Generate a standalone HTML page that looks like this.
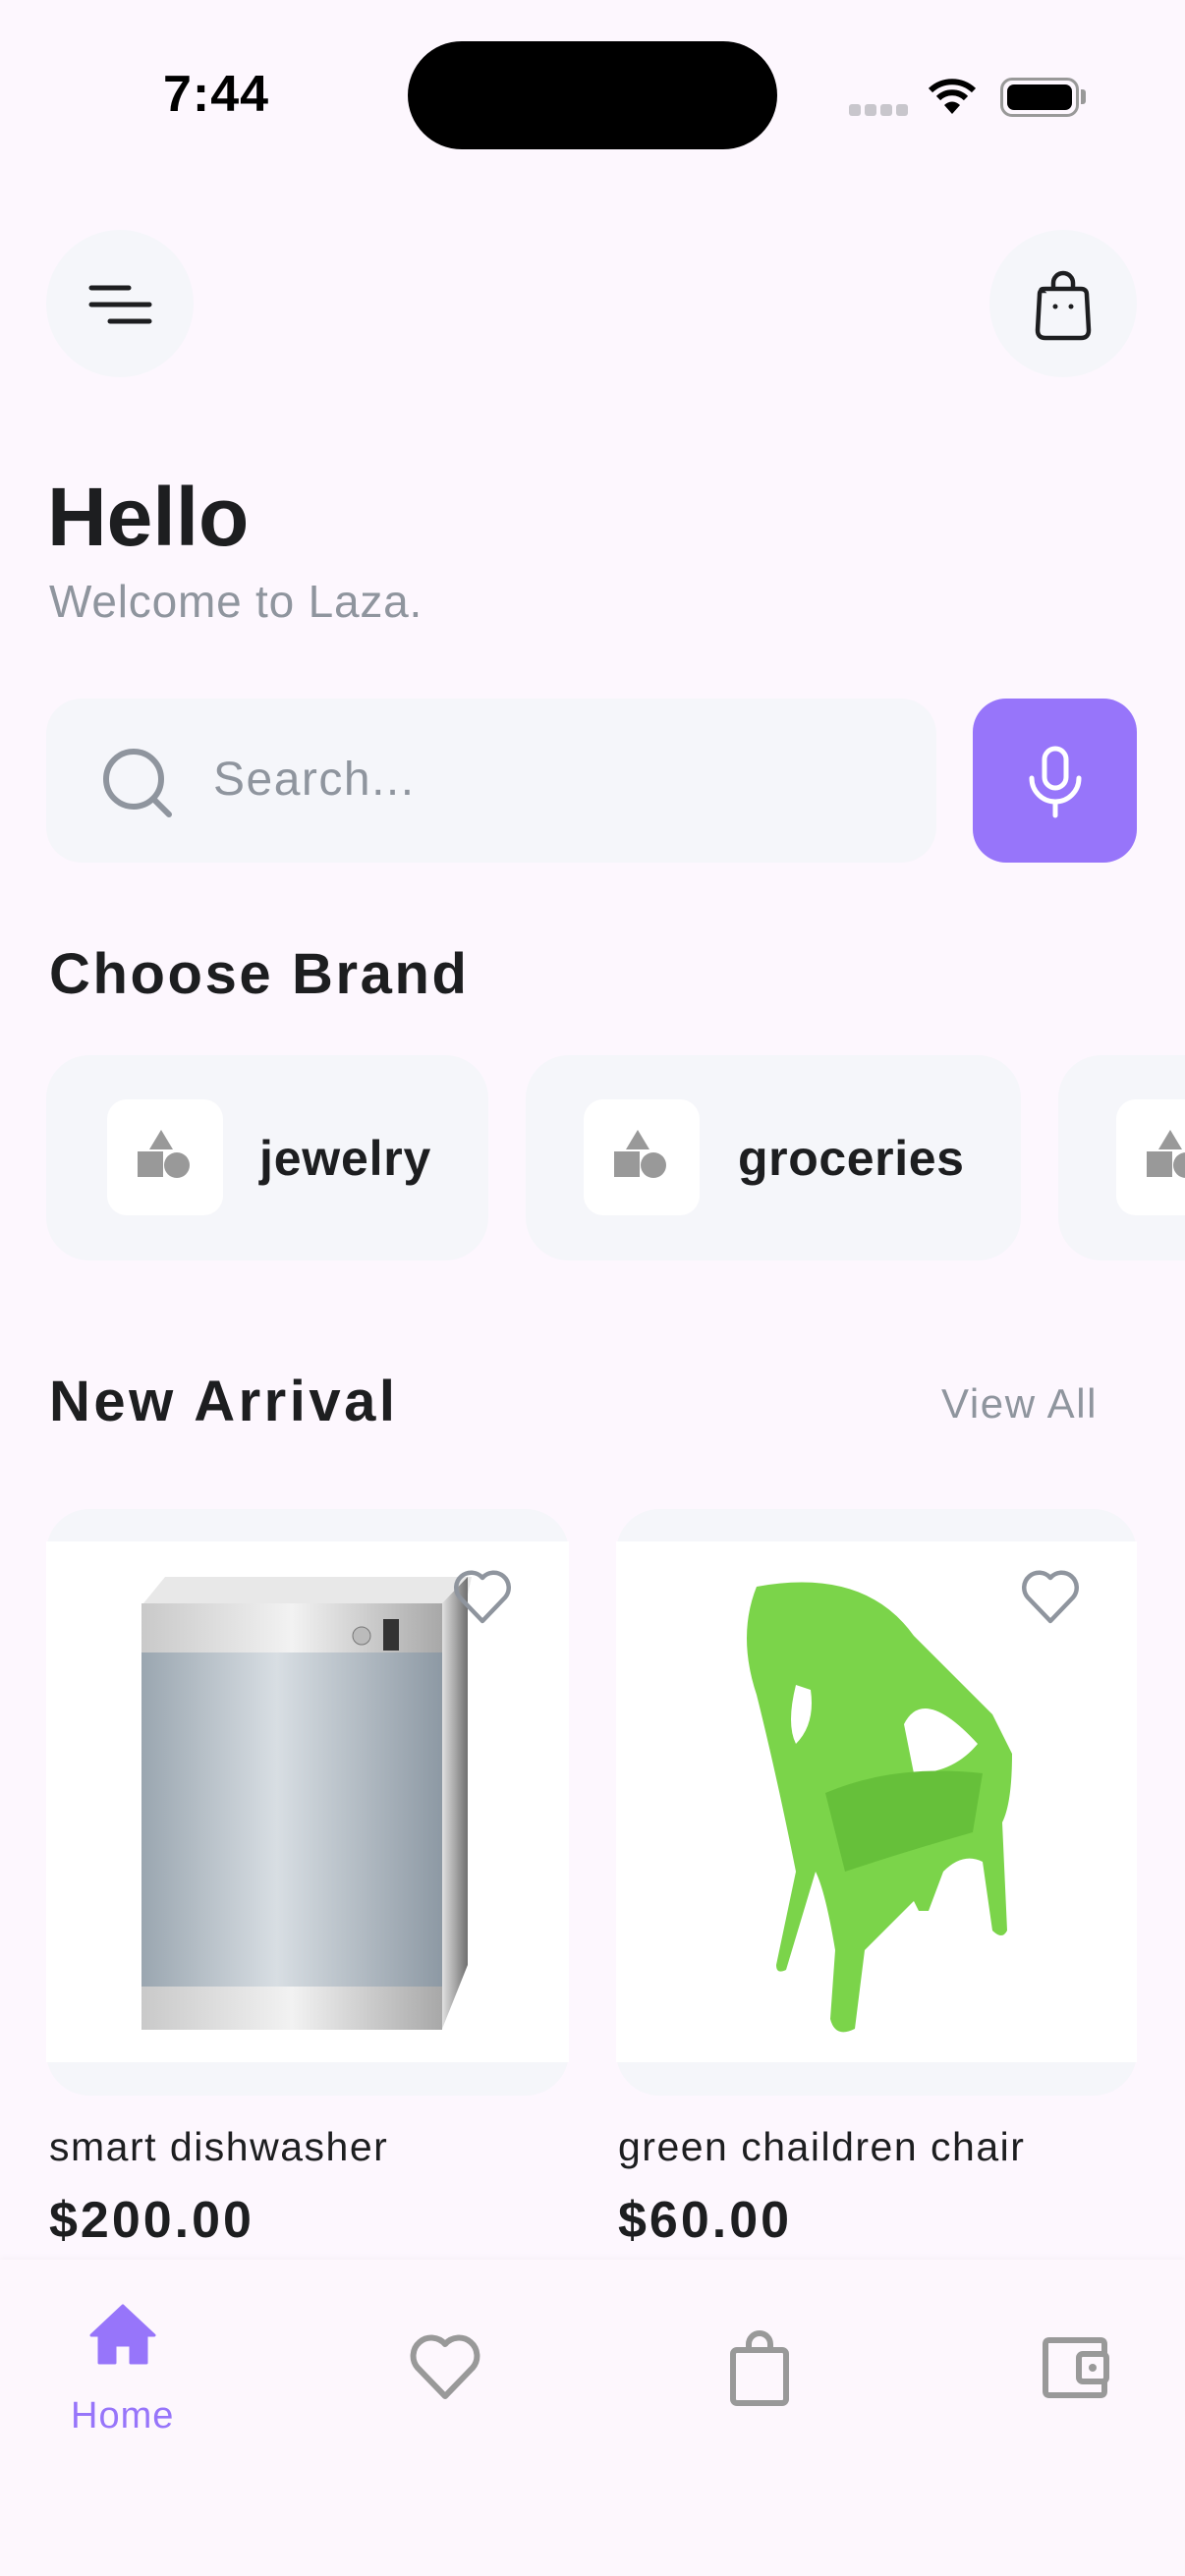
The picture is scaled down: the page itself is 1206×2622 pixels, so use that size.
<!DOCTYPE html>
<html><head><meta charset="utf-8">
<style>
*{margin:0;padding:0;box-sizing:border-box}
body{width:1206px;height:2622px;background:#FDF7FE;font-family:"Liberation Sans",sans-serif;position:relative;overflow:hidden;color:#1D1B20}
.a{position:absolute}
.t{white-space:nowrap}
</style></head><body>
<!-- status bar -->
<div class="a t" style="left:166px;top:66px;font-size:52px;font-weight:700;color:#000;letter-spacing:1px">7:44</div>
<div class="a" style="left:415px;top:42px;width:376px;height:110px;background:#000;border-radius:55px"></div>
<div class="a" style="left:864px;top:106px;width:60px;height:12px;display:flex;gap:4px">
<span style="width:12px;height:12px;border-radius:3px;background:#C8C6CC"></span><span style="width:12px;height:12px;border-radius:3px;background:#C8C6CC"></span><span style="width:12px;height:12px;border-radius:3px;background:#C8C6CC"></span><span style="width:12px;height:12px;border-radius:3px;background:#C8C6CC"></span></div>
<svg class="a" style="left:943px;top:78px" width="52" height="40" viewBox="0 0 52 40"><path d="M4 14 A32 32 0 0 1 48 14" stroke="#000" stroke-width="6" fill="none"/><path d="M12 22 A20 20 0 0 1 40 22" stroke="#000" stroke-width="6" fill="none"/><path d="M26 38 L18 29 A11 11 0 0 1 34 29 Z" fill="#000"/></svg>
<div class="a" style="left:1018px;top:79px;width:80px;height:40px;border:3px solid #999;border-radius:12px;padding:4px"><div style="width:100%;height:100%;background:#000;border-radius:7px"></div></div>
<div class="a" style="left:1100px;top:91px;width:5px;height:15px;background:#999;border-radius:0 3px 3px 0"></div>
<!-- header buttons -->
<div class="a" style="left:47px;top:234px;width:150px;height:150px;border-radius:50%;background:#F5F6FA"></div>
<svg class="a" style="left:88px;top:288px" width="70" height="44" viewBox="0 0 70 44"><g stroke="#1D1E20" stroke-width="5" stroke-linecap="round"><line x1="5" y1="5" x2="43" y2="5"/><line x1="5" y1="22" x2="64" y2="22"/><line x1="24" y1="39" x2="64" y2="39"/></g></svg>
<div class="a" style="left:1007px;top:234px;width:150px;height:150px;border-radius:50%;background:#F5F6FA"></div>
<svg class="a" style="left:1046px;top:272px" width="72" height="76" viewBox="0 0 72 76"><path d="M26 22 V16 A10 10 0 0 1 46 16 V22" stroke="#1D1E20" stroke-width="4.5" fill="none"/><path d="M14 24 Q12 22 18 22 H54 Q60 22 60 28 L62 64 Q62 72 54 72 H18 Q10 72 10 64 L12 28 Q12 24 14 24Z" stroke="#1D1E20" stroke-width="4.5" fill="none"/><circle cx="28" cy="40" r="2.5" fill="#1D1E20"/><circle cx="44" cy="40" r="2.5" fill="#1D1E20"/></svg>
<!-- hello -->
<div class="a t" style="left:48px;top:478px;font-size:84px;font-weight:700;color:#1D1E20">Hello</div>
<div class="a t" style="left:50px;top:585px;font-size:46px;color:#8F959E;letter-spacing:0.8px">Welcome to Laza.</div>
<!-- search -->
<div class="a" style="left:47px;top:711px;width:906px;height:167px;border-radius:36px;background:#F5F6FA"></div>
<svg class="a" style="left:100px;top:757px" width="80" height="80" viewBox="0 0 80 80"><circle cx="36" cy="36" r="28" stroke="#8F959E" stroke-width="6" fill="none"/><line x1="57" y1="57" x2="72" y2="72" stroke="#8F959E" stroke-width="6" stroke-linecap="round"/></svg>
<div class="a t" style="left:217px;top:766px;font-size:48px;color:#8F959E;letter-spacing:1.5px">Search...</div>
<div class="a" style="left:990px;top:711px;width:167px;height:167px;border-radius:34px;background:#9775FA"></div>
<svg class="a" style="left:1040px;top:758px" width="68" height="76" viewBox="0 0 68 76"><rect x="23" y="4" width="22" height="40" rx="11" stroke="#fff" stroke-width="5" fill="none"/><path d="M10 34 A24 24 0 0 0 58 34" stroke="#fff" stroke-width="5" fill="none" stroke-linecap="round"/><line x1="34" y1="58" x2="34" y2="72" stroke="#fff" stroke-width="5" stroke-linecap="round"/></svg>
<!-- choose brand -->
<div class="a t" style="left:50px;top:958px;font-size:58px;font-weight:700;color:#1D1E20;letter-spacing:2.6px">Choose Brand</div>
<div class="a" style="left:47px;top:1074px;width:450px;height:209px;border-radius:44px;background:#F5F6FA"></div>
<div class="a" style="left:535px;top:1074px;width:504px;height:209px;border-radius:44px;background:#F5F6FA"></div>
<div class="a" style="left:1077px;top:1074px;width:200px;height:209px;border-radius:44px;background:#F5F6FA"></div>
<div class="a" style="left:109px;top:1119px;width:118px;height:118px;border-radius:20px;background:#fff"></div>
<div class="a" style="left:594px;top:1119px;width:118px;height:118px;border-radius:20px;background:#fff"></div>
<div class="a" style="left:1136px;top:1119px;width:118px;height:118px;border-radius:20px;background:#fff"></div>
<svg width="0" height="0" style="position:absolute"><defs><g id="sh"><path d="M24 0 L36 20 H12Z" fill="#999"/><rect x="0" y="22" width="26" height="26" fill="#999"/><circle cx="40" cy="36" r="13" fill="#999"/></g></defs></svg>
<svg class="a" style="left:140px;top:1150px" width="60" height="56"><use href="#sh"/></svg>
<svg class="a" style="left:625px;top:1150px" width="60" height="56"><use href="#sh"/></svg>
<svg class="a" style="left:1167px;top:1150px" width="60" height="56"><use href="#sh"/></svg>
<div class="a t" style="left:264px;top:1150px;font-size:50px;font-weight:700;color:#1D1E20;letter-spacing:0.8px">jewelry</div>
<div class="a t" style="left:751px;top:1150px;font-size:50px;font-weight:700;color:#1D1E20;letter-spacing:0.6px">groceries</div>
<!-- new arrival -->
<div class="a t" style="left:50px;top:1393px;font-size:58px;font-weight:700;color:#1D1E20;letter-spacing:3.5px">New Arrival</div>
<div class="a t" style="left:958px;top:1405px;font-size:42px;color:#8F959E;letter-spacing:1.6px">View All</div>
<!-- product cards -->
<div class="a" style="left:47px;top:1536px;width:532px;height:597px;border-radius:44px;background:#F5F6FA"></div>
<div class="a" style="left:47px;top:1569px;width:532px;height:530px;background:#fff"></div>
<div class="a" style="left:627px;top:1536px;width:530px;height:597px;border-radius:44px;background:#F5F6FA"></div>
<div class="a" style="left:627px;top:1569px;width:530px;height:530px;background:#fff"></div>
<!-- dishwasher -->
<svg class="a" style="left:140px;top:1600px" width="350" height="470" viewBox="0 0 350 470">
<defs><linearGradient id="g1" x1="0" x2="1"><stop offset="0" stop-color="#9AA6B0"/><stop offset=".45" stop-color="#D8DEE3"/><stop offset="1" stop-color="#8D99A4"/></linearGradient>
<linearGradient id="g2" x1="0" x2="1"><stop offset="0" stop-color="#C9C9C9"/><stop offset=".5" stop-color="#F2F2F2"/><stop offset="1" stop-color="#A8A8A8"/></linearGradient>
<linearGradient id="g3" x1="0" x2="1"><stop offset="0" stop-color="#E0E0E0"/><stop offset="1" stop-color="#6F6F6F"/></linearGradient></defs>
<path d="M6 32 L28 5 H340 L334 32Z" fill="#E8E8E8"/>
<rect x="4" y="32" width="306" height="50" fill="url(#g2)"/>
<path d="M310 32 L336 5 V400 L310 465Z" fill="url(#g3)"/>
<rect x="4" y="82" width="306" height="340" fill="url(#g1)"/>
<rect x="4" y="422" width="306" height="44" fill="url(#g2)"/>
<rect x="250" y="48" width="16" height="32" fill="#333"/>
<circle cx="228" cy="65" r="9" fill="#bbb" stroke="#777"/>
</svg>
<!-- chair -->
<svg class="a" style="left:730px;top:1605px" width="330" height="470" viewBox="0 0 330 470">
<g fill="#7BD44A">
<path d="M40 10 Q150 -10 200 60 Q240 100 280 140 L300 180 Q300 230 290 250 L295 360 Q290 370 280 360 L270 290 Q250 280 230 300 L215 340 L205 340 L200 330 Q170 360 150 380 L140 460 Q120 470 115 450 L120 380 Q110 320 100 300 L70 400 Q60 405 60 395 L80 300 Q60 200 40 120 Q20 60 40 10Z"/>
</g>
<path d="M80 110 Q70 150 80 170 Q100 150 95 115Z M190 150 Q210 110 265 170 Q240 200 200 200Z" fill="#fff"/>
<path d="M110 220 Q180 190 270 200 L260 260 Q190 280 130 300Z" fill="#66C03A"/>
</svg>
<svg class="a" style="left:460px;top:1596px" width="62" height="60" viewBox="0 0 62 60"><path d="M31 54 L8 30 A13 13 0 0 1 31 10 A13 13 0 0 1 54 30Z" stroke="#8F959E" stroke-width="4.5" fill="none" stroke-linejoin="round"/></svg>
<svg class="a" style="left:1038px;top:1596px" width="62" height="60" viewBox="0 0 62 60"><path d="M31 54 L8 30 A13 13 0 0 1 31 10 A13 13 0 0 1 54 30Z" stroke="#8F959E" stroke-width="4.5" fill="none" stroke-linejoin="round"/></svg>
<div class="a t" style="left:50px;top:2162px;font-size:41px;color:#1D1E20;letter-spacing:1.5px">smart dishwasher</div>
<div class="a t" style="left:629px;top:2162px;font-size:41px;color:#1D1E20;letter-spacing:1.5px">green chaildren chair</div>
<div class="a t" style="left:50px;top:2230px;font-size:52px;font-weight:700;color:#1D1E20;letter-spacing:3px">$200.00</div>
<div class="a t" style="left:629px;top:2230px;font-size:52px;font-weight:700;color:#1D1E20;letter-spacing:3px">$60.00</div>
<!-- bottom nav -->
<div class="a" style="left:0;top:2300px;width:1206px;height:322px;background:#FDF7FD;box-shadow:0 -2px 6px rgba(0,0,0,0.03)"></div>
<svg class="a" style="left:91px;top:2345px" width="68" height="64" viewBox="0 0 68 64"><path d="M34 2 L66 32 H58 V60 H42 V42 H26 V60 H10 V32 H2Z" fill="#9775FA" stroke="#9775FA" stroke-linejoin="round" stroke-width="3"/></svg>
<div class="a t" style="left:72px;top:2438px;font-size:38px;color:#9775FA;letter-spacing:1px">Home</div>
<svg class="a" style="left:416px;top:2375px" width="74" height="70" viewBox="0 0 74 70"><path d="M37 64 L9 35 A16 16 0 0 1 37 11 A16 16 0 0 1 65 35Z" stroke="#999" stroke-width="6" fill="none" stroke-linejoin="round"/></svg>
<svg class="a" style="left:740px;top:2372px" width="66" height="80" viewBox="0 0 66 80"><path d="M22 20 V14 A11 11 0 0 1 44 14 V20" stroke="#999" stroke-width="6" fill="none"/><rect x="6" y="20" width="54" height="54" rx="4" stroke="#999" stroke-width="6" fill="none"/></svg>
<svg class="a" style="left:1058px;top:2374px" width="74" height="72" viewBox="0 0 74 72"><path d="M62 8 H10 Q6 8 6 12 V60 Q6 64 10 64 H62 Q66 64 66 60 V50 M66 22 V12 Q66 8 62 8" stroke="#999" stroke-width="6" fill="none"/><rect x="40" y="22" width="28" height="28" rx="4" stroke="#999" stroke-width="6" fill="none"/><circle cx="54" cy="36" r="4" fill="#999"/></svg>
</body></html>
